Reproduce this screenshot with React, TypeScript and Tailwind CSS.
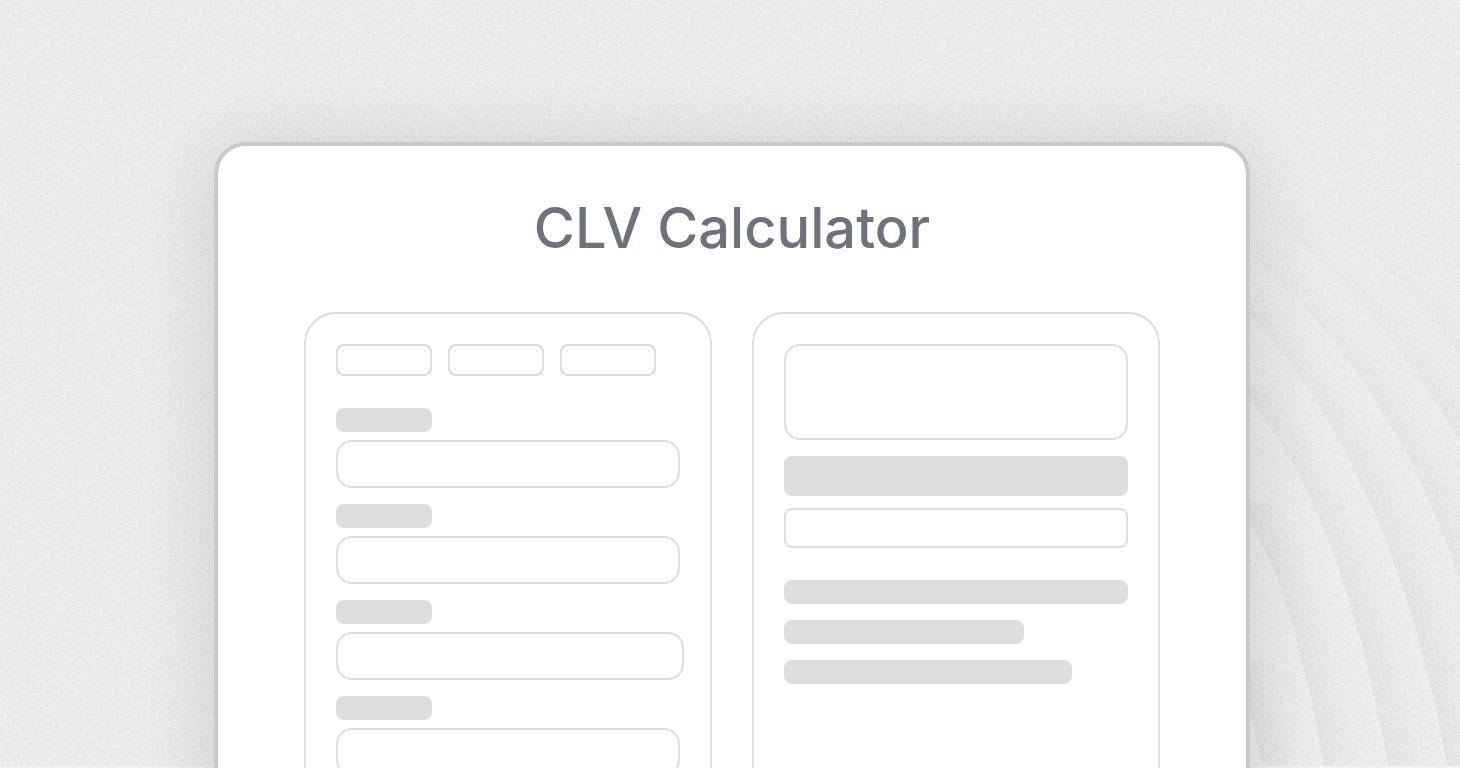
import { useId } from "react"

interface CalcFieldProps {
  label: string
  wide?: boolean
}

const tabs = ["Basic", "Advanced", "Custom"]

const fields: CalcFieldProps[] = [
  { label: "Average order value" },
  { label: "Purchase frequency" },
  { label: "Customer lifespan", wide: true },
  { label: "Profit margin" },
]

// right hand edge of every fold in the paper
const folds = [
  "M1236 660 C1246 695 1257 734 1265 780",
  "M1236 500 C1274 552 1305 640 1326 780",
  "M1236 385 C1302 450 1358 585 1391 780",
  "M1236 300 C1330 395 1412 550 1450 780",
  "M1236 240 C1340 330 1430 450 1484 660",
  "M1270 215 C1345 275 1425 370 1490 495",
  "M1320 212 C1370 245 1430 305 1490 400",
  "M1370 205 C1410 225 1460 260 1490 295",
]

const steps = [0, 1, 2, 3, 4, 5, 6, 7, 8, 9, 10, 11, 12]

function Backdrop() {
  return (
    <div aria-hidden="true" className="absolute inset-0 overflow-hidden">
      <svg viewBox="1250 180 210 588" className="absolute right-0 bottom-0 h-[588px] w-[210px]">
        <defs>
          <linearGradient id="foldFade" gradientUnits="userSpaceOnUse" x1="1390" y1="210" x2="1310" y2="600">
            <stop offset="0" stopColor="#fff" stopOpacity="0.05" />
            <stop offset="0.5" stopColor="#fff" stopOpacity="0.7" />
            <stop offset="1" stopColor="#fff" stopOpacity="1" />
          </linearGradient>
          <mask id="foldMask" maskUnits="userSpaceOnUse" x="1200" y="180" width="320" height="600">
            <rect x="1200" y="180" width="320" height="600" fill="url(#foldFade)" />
          </mask>
        </defs>
        <g mask="url(#foldMask)" fill="none" strokeWidth="3">
          {folds.map((d) => (
            <g key={d}>
              {steps.map((k) => (
                <path key={`d${k}`} d={d} transform={`translate(${k * 3 + 1} 0)`} stroke="#000" strokeOpacity={0.036 * (1 - k / 13)} />
              ))}
              {steps.map((k) => (
                <path key={`l${k}`} d={d} transform={`translate(${-k * 2 - 1} 0)`} stroke="#fff" strokeOpacity={0.08 * (1 - k / 13)} />
              ))}
            </g>
          ))}
        </g>
      </svg>
      <div className="absolute inset-x-0 bottom-0 h-[2px] bg-[#f6f6f6]" />
    </div>
  )
}

function PaperGrain() {
  return (
    <svg aria-hidden="true" className="pointer-events-none absolute inset-0 h-full w-full opacity-[0.05]">
      <filter id="grain" x="0" y="0" width="100%" height="100%">
        <feTurbulence type="fractalNoise" baseFrequency="0.25 0.5" numOctaves="3" seed="4" />
        <feColorMatrix type="matrix" values="2 0 0 0 -0.4  2 0 0 0 -0.4  2 0 0 0 -0.4  0 0 0 0 1" />
      </filter>
      <rect width="100%" height="100%" filter="url(#grain)" />
    </svg>
  )
}

function CalcField({ label, wide }: CalcFieldProps) {
  const id = useId()

  return (
    <div className="flex flex-col gap-2">
      <label htmlFor={id} aria-label={label} className="block h-6 w-24 rounded-lg bg-[#dddddd]" />
      <input
        id={id}
        type="text"
        aria-label={label}
        className={`h-12 rounded-2xl border-2 border-[#dddddd] bg-white px-4 outline-none ${wide ? "" : "mr-1"}`}
      />
    </div>
  )
}

export default function App() {
  return (
    <main className="relative flex h-screen justify-center overflow-hidden bg-[#eeeeee] pt-[142px] pl-1 font-['Inter',sans-serif]">
      <Backdrop />
      <div className="pointer-events-none absolute inset-0 flex justify-center pt-[142px] pl-1" aria-hidden="true">
        <div className="h-[900px] w-full max-w-[1036px] rounded-[32px] shadow-[0_8px_80px_rgba(0,0,0,0.15)]" />
      </div>
      <PaperGrain />

      <section className="relative h-[900px] w-full max-w-[1036px] rounded-[32px] border-4 border-[#cacaca] bg-white px-[86px] pt-12">
        <h1 className="text-center text-[56px] leading-[68px] font-medium text-[#6f717b]">CLV Calculator</h1>

        <div className="mt-[50px] grid h-[700px] grid-cols-2 gap-10">
          <form className="rounded-[32px] border-2 border-[#dddddd] py-[30px] pr-[26px] pl-[30px]">
            <div className="flex gap-4">
              {tabs.map((tab) => (
                <button key={tab} type="button" aria-label={tab} className="h-8 w-24 rounded-lg border-2 border-[#dddddd] bg-white" />
              ))}
            </div>
            <div className="mt-8 flex flex-col gap-4">
              {fields.map((field) => (
                <CalcField key={field.label} {...field} />
              ))}
            </div>
          </form>

          <div className="rounded-[32px] border-2 border-[#dddddd] p-[30px]">
            <div className="h-24 rounded-2xl border-2 border-[#dddddd]" />
            <button type="button" aria-label="Calculate" className="mt-4 block h-10 w-full rounded-lg bg-[#dddddd]" />
            <button type="button" aria-label="Reset" className="mt-3 block h-10 w-full rounded-lg border-2 border-[#dddddd] bg-white" />
            <div className="mt-8 flex flex-col gap-4">
              <div className="h-6 rounded-lg bg-[#dddddd]" />
              <div className="h-6 w-60 rounded-lg bg-[#dddddd]" />
              <div className="h-6 w-72 rounded-lg bg-[#dddddd]" />
            </div>
          </div>
        </div>
      </section>
    </main>
  )
}
